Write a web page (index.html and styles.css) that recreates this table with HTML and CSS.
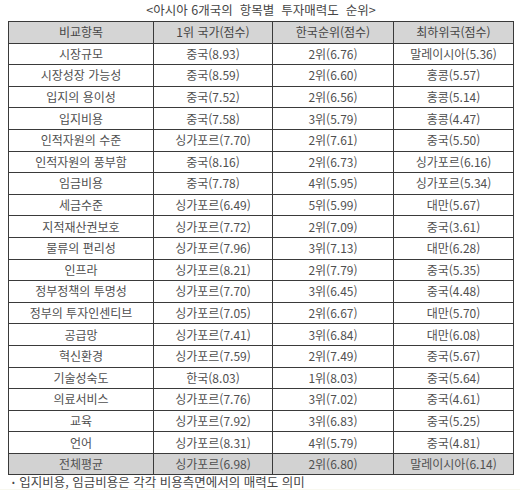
FILE: index.html
```html
<!DOCTYPE html>
<html lang="ko">
<head>
<meta charset="utf-8">
<link rel="stylesheet" href="styles.css">
</head>
<body>
<div class="page">
  <div class="title">&lt;아시아 6개국의 &nbsp;항목별 &nbsp;투자매력도 &nbsp;순위&gt;</div>
  <table class="rank">
    <colgroup>
      <col class="c1"><col class="c2"><col class="c3"><col class="c4">
    </colgroup>
    <thead>
      <tr class="head"><th>비교항목</th><th>1위 국가(점수)</th><th>한국순위(점수)</th><th>최하위국(점수)</th></tr>
    </thead>
    <tbody>
      <tr><td>시장규모</td><td>중국(8.93)</td><td>2위(6.76)</td><td>말레이시아(5.36)</td></tr>
      <tr><td>시장성장 가능성</td><td>중국(8.59)</td><td>2위(6.60)</td><td>홍콩(5.57)</td></tr>
      <tr><td>입지의 용이성</td><td>중국(7.52)</td><td>2위(6.56)</td><td>홍콩(5.14)</td></tr>
      <tr><td>입지비용</td><td>중국(7.58)</td><td>3위(5.79)</td><td>홍콩(4.47)</td></tr>
      <tr><td>인적자원의 수준</td><td>싱가포르(7.70)</td><td>2위(7.61)</td><td>중국(5.50)</td></tr>
      <tr><td>인적자원의 풍부함</td><td>중국(8.16)</td><td>2위(6.73)</td><td>싱가포르(6.16)</td></tr>
      <tr><td>임금비용</td><td>중국(7.78)</td><td>4위(5.95)</td><td>싱가포르(5.34)</td></tr>
      <tr><td>세금수준</td><td>싱가포르(6.49)</td><td>5위(5.99)</td><td>대만(5.67)</td></tr>
      <tr><td>지적재산권보호</td><td>싱가포르(7.72)</td><td>2위(7.09)</td><td>중국(3.61)</td></tr>
      <tr><td>물류의 편리성</td><td>싱가포르(7.96)</td><td>3위(7.13)</td><td>대만(6.28)</td></tr>
      <tr><td>인프라</td><td>싱가포르(8.21)</td><td>2위(7.79)</td><td>중국(5.35)</td></tr>
      <tr><td>정부정책의 투명성</td><td>싱가포르(7.70)</td><td>3위(6.45)</td><td>중국(4.48)</td></tr>
      <tr><td>정부의 투자인센티브</td><td>싱가포르(7.05)</td><td>2위(6.67)</td><td>대만(5.70)</td></tr>
      <tr><td>공급망</td><td>싱가포르(7.41)</td><td>3위(6.84)</td><td>대만(6.08)</td></tr>
      <tr><td>혁신환경</td><td>싱가포르(7.59)</td><td>2위(7.49)</td><td>중국(5.67)</td></tr>
      <tr><td>기술성숙도</td><td>한국(8.03)</td><td>1위(8.03)</td><td>중국(5.64)</td></tr>
      <tr><td>의료서비스</td><td>싱가포르(7.76)</td><td>3위(7.02)</td><td>중국(4.61)</td></tr>
      <tr><td>교육</td><td>싱가포르(7.92)</td><td>3위(6.83)</td><td>중국(5.25)</td></tr>
      <tr><td>언어</td><td>싱가포르(8.31)</td><td>4위(5.79)</td><td>중국(4.81)</td></tr>
      <tr class="avg"><td>전체평균</td><td>싱가포르(6.98)</td><td>2위(6.80)</td><td>말레이시아(6.14)</td></tr>
    </tbody>
  </table>
  <div class="note"><span class="dot">•</span> 입지비용, 임금비용은 각각 비용측면에서의 매력도 의미</div>
  <div class="strip"></div>
</div>
</body>
</html>
```

FILE: styles.css
```css
html, body {
  margin: 0;
  padding: 0;
  background: #ffffff;
}
.page {
  width: 520px;
  height: 490px;
  font-family: "Noto Sans CJK KR", "Noto Sans", sans-serif;
  color: #505050;
  overflow: hidden;
}
.title {
  height: 21px;
  line-height: 20px;
  font-size: 12.5px;
  text-align: center;
  color: #454545;
  padding-left: 2px;
}
.rank {
  margin-left: 8px;
  width: 505px;
  border-collapse: collapse;
  border: 1px solid #262626;
  table-layout: fixed;
  font-size: 12px;
}
.c1 { width: 145px; }
.c2 { width: 119px; }
.c3 { width: 121px; }
.c4 { width: 120px; }
.rank th, .rank td {
  border: 1px solid #3a3a3a;
  height: 20.6px;
  padding: 0;
  text-align: center;
  font-weight: normal;
  white-space: nowrap;
  line-height: 14px;
}
.head th {
  background: #d5d5d5;
  color: #454545;
}
.avg td {
  background: #d2d2d2;
}
.note {
  margin-top: 0;
  padding-left: 12px;
  font-size: 12.5px;
  line-height: 14px;
  color: #454545;
}
.dot {
  font-size: 8px;
  vertical-align: 2px;
  margin-right: 1px;
}
.strip {
  margin-top: 0;
  height: 4px;
  background: #f8f8ef;
}
```
